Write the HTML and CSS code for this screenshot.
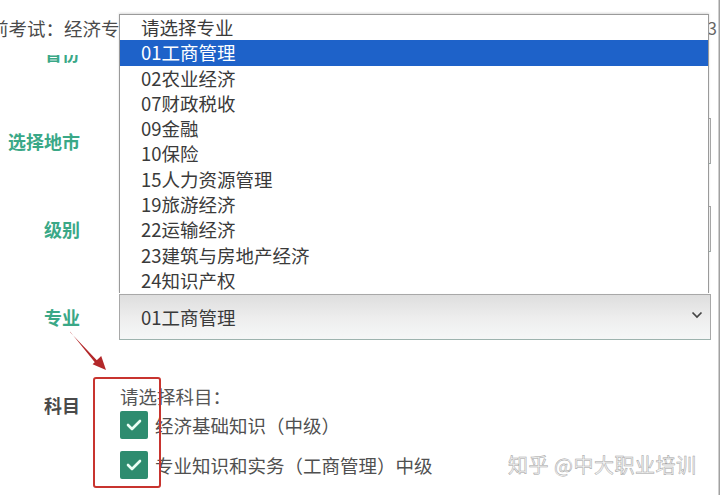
FILE: index.html
```html
<!DOCTYPE html>
<html lang="zh">
<head>
<meta charset="utf-8">
<title>选择专业</title>
<link rel="stylesheet" href="styles.css">
</head>
<body>
<div class="page">
  <div class="topline"><span class="exam">前考试：经济专业</span><span class="num">3</span></div>
  <div class="form">
    <div class="row row-clip"><div class="label clip-text">省份</div></div>
    <div class="row row-sel first"><div class="label">选择地市</div><div class="select"></div></div>
    <div class="row row-sel"><div class="label">级别</div><div class="select"></div></div>
    <div class="row row-sel"><div class="label">专业</div>
      <div class="select shown"><span>01工商管理</span>
        <svg class="chev" width="12" height="8" viewBox="0 0 12 8"><polyline points="1.5,1.5 6,6 10.5,1.5" fill="none" stroke="#444" stroke-width="1.7"/></svg>
      </div>
    </div>
    <div class="row row-subj"><div class="label dark">科目</div>
      <div class="subjects">
        <div class="hint">请选择科目：</div>
        <div class="check"><span class="box"><svg width="16" height="12" viewBox="0 0 16 12"><polyline points="2,6 6,10 14,2" fill="none" stroke="#eafff5" stroke-width="2.6" stroke-linecap="round" stroke-linejoin="round"/></svg></span><span>经济基础知识（中级）</span></div>
        <div class="check"><span class="box"><svg width="16" height="12" viewBox="0 0 16 12"><polyline points="2,6 6,10 14,2" fill="none" stroke="#eafff5" stroke-width="2.6" stroke-linecap="round" stroke-linejoin="round"/></svg></span><span>专业知识和实务（工商管理）中级</span></div>
      </div>
    </div>
  </div>

  <ul class="dropdown">
    <li>请选择专业</li>
    <li class="active">01工商管理</li>
    <li>02农业经济</li>
    <li>07财政税收</li>
    <li>09金融</li>
    <li>10保险</li>
    <li>15人力资源管理</li>
    <li>19旅游经济</li>
    <li>22运输经济</li>
    <li>23建筑与房地产经济</li>
    <li>24知识产权</li>
  </ul>

  <svg class="arrow" width="120" height="120" viewBox="0 0 120 120">
    <polygon points="70,331.6 70.4,332.4 98,361.4 95.6,363.2" transform="translate(0,-280)" fill="#b3282a"/>
    <polygon points="106,370 92.6,364.2 101.2,356" transform="translate(0,-280)" fill="#b3282a"/>
  </svg>
  <div class="redbox"></div>
  <div class="watermark">知乎 @中大职业培训</div>
  <div class="edge"></div>
</div>
</body>
</html>
```
FILE: styles.css
```css
* { box-sizing: border-box; }
html, body { margin: 0; padding: 0; }
body {
  width: 720px;
  height: 495px;
  overflow: hidden;
  background: #ffffff;
  font-family: "Noto Sans CJK SC", "Noto Sans", sans-serif;
}
.page {
  position: relative;
  width: 720px;
  height: 495px;
  overflow: hidden;
}
.topline {
  margin-top: 14px;
  height: 28px;
  line-height: 28px;
  font-size: 18.5px;
  color: #4a4a4a;
  display: flex;
  justify-content: space-between;
}
.exam { margin-left: -10px; white-space: nowrap; }
.num { margin-right: 3px; font-size: 17px; color: #666; }

.row {
  display: flex;
  align-items: center;
}
.label {
  width: 80px;
  flex: none;
  text-align: right;
  font-size: 18px;
  font-weight: bold;
  color: #3aa887;
  line-height: 22px;
}
.label.dark { color: #4a4a4a; }

.row-clip {
  margin-top: 13px;
  height: 9px;
  overflow: hidden;
  align-items: flex-start;
}
.clip-text { margin-top: -13px; }

.row-sel { margin-top: 42px; }
.row-sel.first { margin-top: 54px; }
.select {
  flex: 1;
  margin-left: 39px;
  margin-right: 9px;
  height: 46px;
  border: 1px solid #a8a8a8;
  border-bottom-color: #9db3ae;
  background: #fafafa;
  display: flex;
  align-items: center;
  justify-content: space-between;
  padding: 0 7px 0 21px;
  font-size: 18.5px;
  color: #3a3a3a;
}
.select.shown {
  background: linear-gradient(#dedede, #eeeeee 55%, #f5f7f7);
}
.chev { margin-top: -4px; }

.row-subj {
  margin-top: 44px;
  align-items: flex-start;
}
.row-subj .label { margin-top: 9px; line-height: 24px; }
.subjects {
  margin-left: 40px;
  display: flex;
  flex-direction: column;
  gap: 12px;
  font-size: 18.5px;
  color: #505050;
}
.hint { line-height: 24px; margin-bottom: -9px; color: #555; }
.check {
  display: flex;
  align-items: center;
  gap: 7px;
  height: 28px;
}
.box {
  width: 28px;
  height: 28px;
  background: #2e8c6f;
  border-radius: 2px;
  display: flex;
  align-items: center;
  justify-content: center;
}

.dropdown {
  position: absolute;
  left: 119px;
  top: 14px;
  width: 590px;
  margin: 0;
  padding: 0;
  list-style: none;
  background: #ffffff;
  border: 1px solid #9a9a9a;
  border-bottom: none;
  box-shadow: 0 -1px 2px rgba(0,0,0,0.15);
}
.dropdown li {
  height: 25.3px;
  line-height: 25.3px;
  padding-left: 21px;
  font-size: 18.5px;
  color: #3a3a3a;
  white-space: nowrap;
}
.dropdown li.active {
  background: #1e62c9;
  color: #ffffff;
}

.arrow {
  position: absolute;
  left: 0;
  top: 280px;
}
.redbox {
  position: absolute;
  left: 93px;
  top: 377px;
  width: 68px;
  height: 111px;
  border: 2px solid #c8342f;
  border-radius: 3px;
}
.watermark {
  position: absolute;
  left: 508px;
  top: 452px;
  font-size: 20px;
  line-height: 26px;
  color: #f4f4f4;
  -webkit-text-stroke: 0.5px #a4a4a4;
  letter-spacing: 0.5px;
  white-space: nowrap;
}
.edge {
  position: absolute;
  right: 0;
  top: 0;
  width: 2px;
  height: 495px;
  background: linear-gradient(90deg, #e6e6e6, #8a8a8a);
}
```
